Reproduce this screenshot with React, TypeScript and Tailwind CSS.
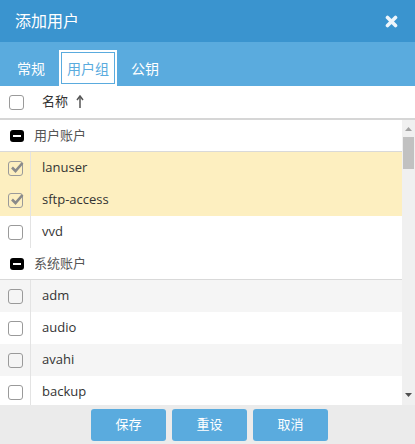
import React from 'react'

type Row = { kind: 'group'; label: string } | { kind: 'item'; label: string; checked?: boolean; bg: string }

const rows: Row[] = [
  { kind: 'group', label: '用户账户' },
  { kind: 'item', label: 'lanuser', checked: true, bg: 'bg-[#fdefc0]' },
  { kind: 'item', label: 'sftp-access', checked: true, bg: 'bg-[#fdefc0]' },
  { kind: 'item', label: 'vvd', bg: 'bg-white' },
  { kind: 'group', label: '系统账户' },
  { kind: 'item', label: 'adm', bg: 'bg-[#f5f5f5]' },
  { kind: 'item', label: 'audio', bg: 'bg-white' },
  { kind: 'item', label: 'avahi', bg: 'bg-[#f5f5f5]' },
  { kind: 'item', label: 'backup', bg: 'bg-white' },
]

const Box: React.FC<{ checked?: boolean }> = ({ checked }) => (
  <span className="relative block w-[15px] h-[15px] rounded-[3px] border border-[#9a9a9a]">
    {checked && (
      <svg className="absolute -top-[2px] left-[1px]" width="14" height="14" viewBox="0 0 14 14">
        <path d="M2 7.5 L5.5 11 L12.5 3" fill="none" stroke="#8a8a8a" strokeWidth="2.6" />
      </svg>
    )}
  </span>
)

const App: React.FC = () => {
  return (
    <div className="w-[415px] h-[444px] flex flex-col bg-white overflow-hidden font-['Open_Sans','Noto_Sans_CJK_SC',sans-serif] text-[13px] text-[#333]">
      {/* 标题栏 */}
      <div className="h-[42px] shrink-0 bg-[#3a94cf] flex items-center justify-between pl-[15px] pr-[17px]">
        <span className="text-white text-[16px]">添加用户</span>
        <svg width="13" height="13" viewBox="0 0 13 13">
          <path d="M2.5 2.5 L10.5 10.5 M10.5 2.5 L2.5 10.5" stroke="#eef5fb" strokeWidth="3.6" strokeLinecap="round" />
        </svg>
      </div>

      {/* 标签 */}
      <div className="h-[44px] shrink-0 bg-[#5aabde] flex items-end text-white text-[14px]">
        <div className="h-[36px] pl-[17px] pr-[14px] flex items-center">常规</div>
        <div className="h-[36px] w-[58px] bg-white p-[2px]">
          <div className="h-full border border-[#5aabde] flex items-center justify-center text-[#5aabde]">用户组</div>
        </div>
        <div className="h-[36px] pl-[14px] flex items-center">公钥</div>
      </div>

      {/* 表头 */}
      <div className="h-[34px] shrink-0 flex items-center border-b-2 border-[#d6d6d6]">
        <div className="w-[31px] flex justify-center pl-[1px]">
          <Box />
        </div>
        <span className="ml-[11px]">名称</span>
        <svg className="ml-[8px]" width="8" height="14" viewBox="0 0 8 14">
          <path d="M4 1.5 V13" stroke="#555" strokeWidth="1.5" />
          <path d="M1 5 L4 1 L7 5" fill="none" stroke="#555" strokeWidth="1.5" />
        </svg>
      </div>

      {/* 列表 */}
      <div className="flex-1 flex min-h-0">
        <div className="flex-1 overflow-hidden">
          {rows.map((r, i) =>
            r.kind === 'group' ? (
              <div key={i} className="h-[32px] flex items-center border-b border-[#d9d9d9] text-[#555]">
                <span className="ml-[10px] w-[14px] h-[12px] rounded-[3px] bg-black flex items-center justify-center">
                  <span className="w-[8px] h-[2px] bg-white" />
                </span>
                <span className="ml-[10px]">{r.label}</span>
              </div>
            ) : (
              <div key={i} className={`h-[32px] flex items-center ${r.bg}`}>
                <div className="w-[31px] h-full flex items-center justify-center border-r border-[#e3e3e3] pl-[1px]">
                  <Box checked={r.checked} />
                </div>
                <span className="ml-[11px]">{r.label}</span>
              </div>
            )
          )}
        </div>
        {/* 滚动条 */}
        <div className="w-[13px] shrink-0 bg-[#f0f0f0] flex flex-col items-center">
          <svg className="mt-[7px]" width="7" height="4" viewBox="0 0 7 4">
            <path d="M0 4 L3.5 0 L7 4 Z" fill="#a3a3a3" />
          </svg>
          <div className="mt-[6px] w-[11px] h-[32px] bg-[#c1c1c1]" />
          <div className="flex-1" />
          <svg className="mb-[8px]" width="7" height="4" viewBox="0 0 7 4">
            <path d="M0 0 L7 0 L3.5 4 Z" fill="#505050" />
          </svg>
        </div>
      </div>

      {/* 按钮 */}
      <div className="h-[39px] shrink-0 bg-[#ebebeb] flex justify-center gap-[6px] pt-[4px] pl-[4px]">
        {['保存', '重设', '取消'].map((t) => (
          <button key={t} className="w-[75px] h-[32px] rounded-[3px] bg-[#5aabde] text-white text-[13px]">
            {t}
          </button>
        ))}
      </div>
    </div>
  )
}

export default App
